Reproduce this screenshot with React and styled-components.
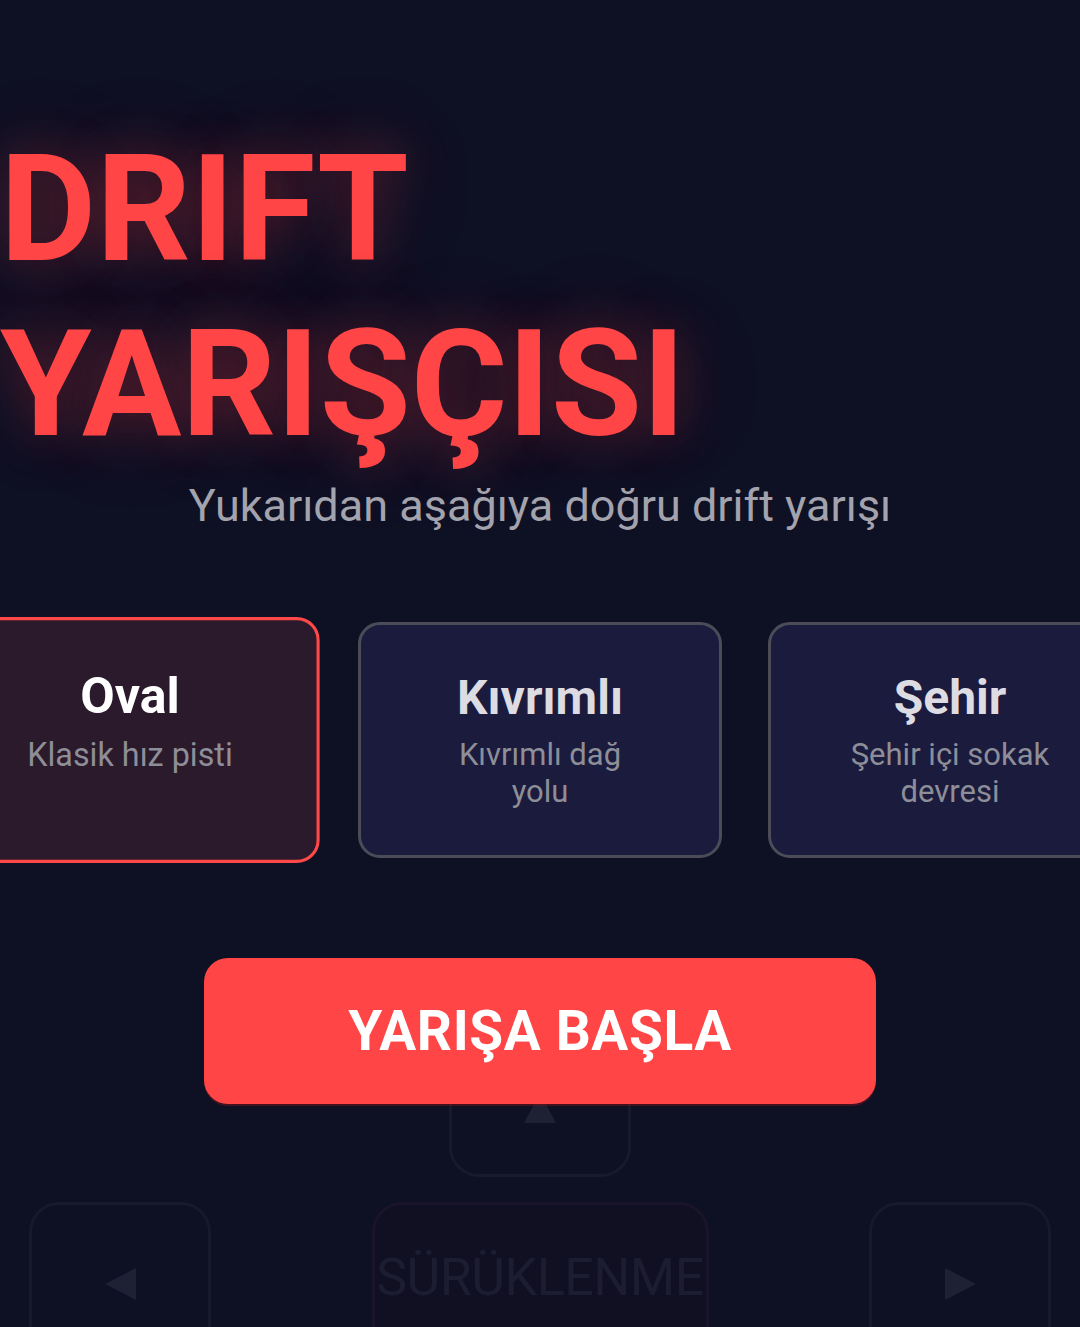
import React from "react";
import styled, { createGlobalStyle } from "styled-components";

const GlobalStyle = createGlobalStyle`
  html, body {
    margin: 0;
    padding: 0;
    background: #0e1024;
  }
  * { box-sizing: border-box; }
`;

const Screen = styled.div`
  position: relative;
  width: 1080px;
  height: 1327px;
  overflow: hidden;
  background: #0e1024;
  font-family: Roboto, "Noto Sans", sans-serif;
`;

/* Game HUD that sits underneath the start menu */
const Hud = styled.div`
  position: absolute;
  left: 0;
  right: 0;
  top: 997px;
  display: flex;
  flex-direction: column;
  align-items: center;
  gap: 25px;
  z-index: 0;
`;

const HudRow = styled.div`
  width: 100%;
  display: flex;
  justify-content: space-between;
  padding: 0 29px 0 29px;
`;

const PadButton = styled.div`
  width: ${(p) => p.$w || 182}px;
  height: ${(p) => (p.$top ? 180 : 164)}px;
  border: 3px solid ${(p) => (p.$accent ? "#1a1428" : "#161a2c")};
  background: ${(p) => (p.$accent ? "#110f22" : "transparent")};
  border-radius: 30px;
  display: flex;
  justify-content: center;
  align-items: ${(p) => (p.$top ? "flex-start" : "center")};
  padding-top: ${(p) => (p.$top ? "93px" : "0")};
  padding-bottom: ${(p) => (p.$accent ? "14px" : "0")};
`;

const PadLabel = styled.span`
  font-size: 52px;
  font-weight: 400;
  color: #1c1d31;
  letter-spacing: -0.5px;
  white-space: nowrap;
`;

const Arrow = ({ dir }) => {
  const pts = {
    up: "16,0 32,30 0,30",
    left: "31,0 31,32 0,16",
    right: "0,0 31,16 0,32",
  }[dir];
  const w = dir === "up" ? 32 : 31;
  const h = dir === "up" ? 30 : 32;
  return (
    <svg width={w} height={h} viewBox={`0 0 ${w} ${h}`}>
      <polygon points={pts} fill="#1e2034" />
    </svg>
  );
};

/* Start menu */
const Menu = styled.div`
  position: relative;
  z-index: 1;
  display: flex;
  flex-direction: column;
  align-items: center;
  padding-top: 122px;
`;

const Title = styled.h1`
  align-self: stretch;
  margin: 0;
  font-size: 148px;
  line-height: 175px;
  font-weight: 700;
  color: #ff4545;
  text-shadow: 0 0 50px rgba(255, 69, 69, 0.28), 0 0 100px rgba(255, 69, 69, 0.16);
  white-space: pre-line;
`;

const Subtitle = styled.p`
  margin: 7px 0 0;
  font-size: 45px;
  line-height: 53px;
  color: #a3a3ad;
  text-align: center;
`;

const TrackRow = styled.div`
  margin-top: 90px;
  width: 1184px;
  flex-shrink: 0;
  display: flex;
  gap: 46px;
`;

const TrackCard = styled.div`
  width: 364px;
  flex-shrink: 0;
  border-radius: 22px;
  border: 3px solid ${(p) => (p.$active ? "#ff4848" : "#4b4c58")};
  background: ${(p) => (p.$active ? "#2b1a2b" : "#1b1b3e")};
  transform: ${(p) => (p.$active ? "scale(1.042)" : "none")};
  padding: 45px 66px 45px;
  display: flex;
  flex-direction: column;
  align-items: center;
  text-align: center;
  gap: 10px;
`;

const TrackName = styled.div`
  font-size: 48px;
  line-height: 56px;
  font-weight: 700;
  color: ${(p) => (p.$active ? "#ffffff" : "#dcdce2")};
`;

const TrackDesc = styled.div`
  font-size: 31px;
  line-height: 37px;
  color: #8e8e98;
`;

const StartButton = styled.button`
  margin-top: 100px;
  width: 672px;
  height: 146px;
  border: none;
  border-radius: 24px;
  background: #ff4545;
  color: #ffffff;
  font-family: Roboto, "Noto Sans", sans-serif;
  font-size: 55px;
  font-weight: 700;
  letter-spacing: 0.6px;
  box-shadow: 0 2px 0 rgba(120, 20, 30, 0.5);
  cursor: pointer;
`;

const tracks = [
  { name: "Oval", desc: "Klasik hız pisti", active: true },
  { name: "Kıvrımlı", desc: "Kıvrımlı dağ yolu" },
  { name: "Şehir", desc: "Şehir içi sokak devresi" },
];

export default function App() {
  return (
    <>
      <GlobalStyle />
      <Screen>
        <Hud>
          <PadButton $top>
            <Arrow dir="up" />
          </PadButton>
          <HudRow>
            <PadButton>
              <Arrow dir="left" />
            </PadButton>
            <PadButton $w={337} $accent>
              <PadLabel>SÜRÜKLENME</PadLabel>
            </PadButton>
            <PadButton>
              <Arrow dir="right" />
            </PadButton>
          </HudRow>
        </Hud>

        <Menu>
          <Title>{"DRIFT\nYARIŞÇISI"}</Title>
          <Subtitle>Yukarıdan aşağıya doğru drift yarışı</Subtitle>
          <TrackRow>
            {tracks.map((t) => (
              <TrackCard key={t.name} $active={t.active}>
                <TrackName $active={t.active}>{t.name}</TrackName>
                <TrackDesc>{t.desc}</TrackDesc>
              </TrackCard>
            ))}
          </TrackRow>
          <StartButton>YARIŞA BAŞLA</StartButton>
        </Menu>
      </Screen>
    </>
  );
}
